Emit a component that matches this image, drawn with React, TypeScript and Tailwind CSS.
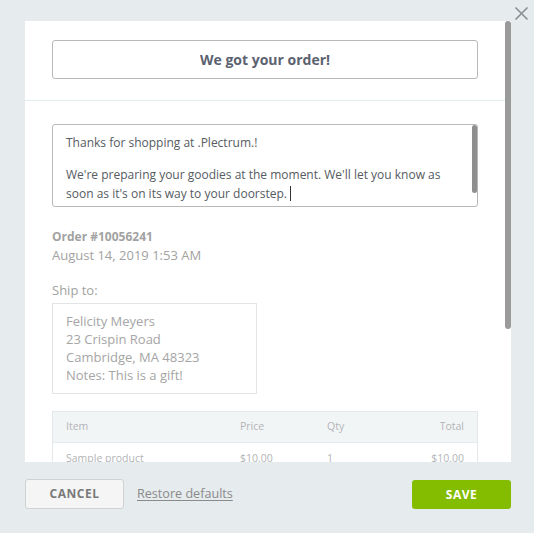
import React from 'react';

export default function App() {
  return (
    <div className="relative h-[533px] w-[534px] overflow-hidden bg-[#e6ebee]" style={{ fontFamily: '"Open Sans", sans-serif' }}>
      {/* Close */}
      <button className="absolute left-[514px] top-[6px] text-[#8a8f94]">
        <svg width="15" height="15" viewBox="0 0 15 15" fill="none" stroke="currentColor" strokeWidth="1.6">
          <path d="M1.5 1.5 L13.5 13.5 M13.5 1.5 L1.5 13.5" />
        </svg>
      </button>

      <div className="pt-[21px] pl-[25px]">
        <div className="relative h-[441px] w-[486px] overflow-hidden bg-white">
          {/* Panel scrollbar */}
          <div className="absolute right-0 top-0 h-[308px] w-[6px] rounded-full bg-[#9a9a9a]" />

          {/* Header */}
          <div className="pl-[27px] pr-[33px] pt-[19px] pb-[21px] border-b border-[#e3ecef]">
            <div className="flex h-[39px] items-center justify-center rounded-[3px] border border-[#b8b8b8] text-[14px] font-bold text-[#5b6270]">
              We got your order!
            </div>
          </div>

          {/* Body */}
          <div className="pl-[27px] pr-[33px] pt-[23px]">
            <div className="relative h-[83px] rounded-[3px] border border-[#b8b8b8] pl-[13px] pr-[20px] pt-[10px] text-[12px] leading-[16px] text-[#555b61]">
              <div className="absolute right-0 top-0 h-[68px] w-[5px] rounded-full bg-[#8f8f8f]" />
              <p>Thanks for shopping at .Plectrum.!</p>
              <p className="mt-[16px]">
                We're preparing your goodies at the moment. We'll let you know as soon as it's on its way to your doorstep.
                <span className="ml-[3px] inline-block h-[15px] w-px translate-y-[3px] bg-[#333]" />
              </p>
            </div>

            <div className="mt-[21px] text-[12px] leading-[18px] text-[#a2a2a2]">
              <div className="font-bold">Order #10056241</div>
              <div className="text-[13px]">August 14, 2019 1:53 AM</div>
            </div>

            <div className="mt-[17px] text-[13px] leading-[18px] text-[#a2a2a2]">Ship to:</div>
            <div className="mt-[4px] h-[91px] w-[205px] border border-[#e2e4e6] pl-[13px] pt-[8px] text-[13px] leading-[18px] text-[#a5a5a5]">
              <div>Felicity Meyers</div>
              <div>23 Crispin Road</div>
              <div>Cambridge, MA 48323</div>
              <div>Notes: This is a gift!</div>
            </div>

            <div className="mt-[17px] border border-[#e3e8ea] text-[10.5px] text-[#b2b4b6]">
              <div className="grid h-[31px] grid-cols-[174px_87px_1fr_80px] items-center border-b border-[#e3e8ea] bg-[#f2f5f6] px-[13px]">
                <span>Item</span>
                <span>Price</span>
                <span>Qty</span>
                <span className="text-right">Total</span>
              </div>
              <div className="grid h-[31px] grid-cols-[174px_87px_1fr_80px] items-center px-[13px]">
                <span>Sample product</span>
                <span>$10.00</span>
                <span>1</span>
                <span className="text-right">$10.00</span>
              </div>
            </div>
          </div>
        </div>
      </div>

      {/* Footer */}
      <div className="flex items-center pl-[25px] pr-[23px] pt-[17px]">
        <button className="h-[30px] w-[99px] rounded-[3px] border border-[#cfd1d3] bg-[#f5f5f5] text-[12px] font-bold tracking-[0.5px] text-[#7a7a7a]">
          CANCEL
        </button>
        <button className="ml-[13px] text-[12.6px] text-[#8a8a8a] underline underline-offset-2">Restore defaults</button>
        <button className="ml-auto mt-[1px] h-[29px] w-[99px] rounded-[3px] bg-[#84bd00] text-[12px] font-bold tracking-[0.5px] text-white">
          SAVE
        </button>
      </div>
    </div>
  );
}
